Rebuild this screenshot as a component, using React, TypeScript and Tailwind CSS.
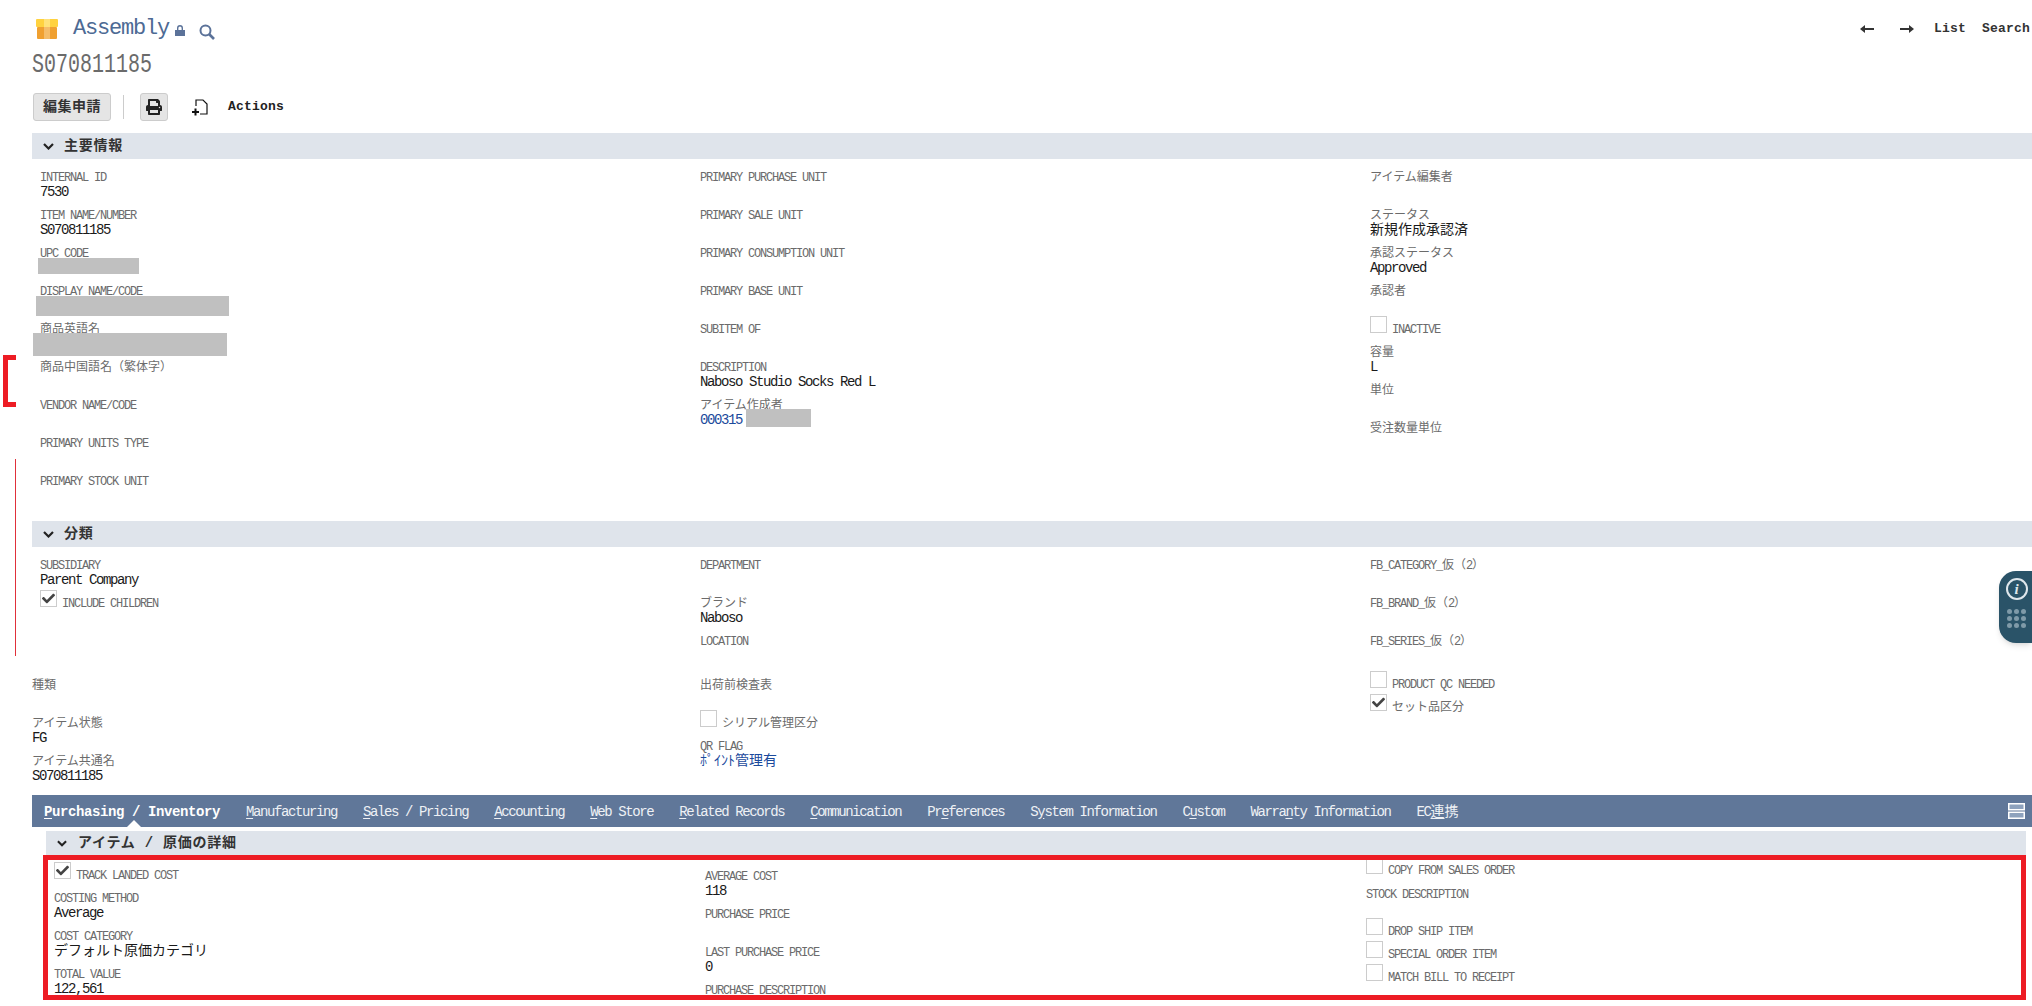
import React from 'react';
import { FaCheck, FaPrint } from 'react-icons/fa';

const MONO = 'font-["Liberation_Mono","Noto_Sans_CJK_JP",monospace]';

// ASCII gets squeezed to half width, CJK keeps its full width
const Txt: React.FC<{ text: string; ascii: string }> = ({ text, ascii }) => {
  const parts = text.match(/[\x20-\x7e]+|[^\x20-\x7e]+/g) || [];
  return (
    <>
      {parts.map((p, i) =>
        /^[\x20-\x7e]/.test(p) ? (
          <span key={i} className={`whitespace-pre ${ascii}`}>{p}</span>
        ) : (
          <span key={i} className="whitespace-pre">{p}</span>
        )
      )}
    </>
  );
};

const Label: React.FC<{ text: string }> = ({ text }) => (
  <div className="h-[15px] text-[12px] leading-[18px] text-[#6b6b6b] whitespace-nowrap">
    <Txt text={text} ascii="tracking-[-1.2px]" />
  </div>
);

const Value: React.FC<{ text: string; link?: boolean }> = ({ text, link }) => (
  <div className={`h-[15px] text-[14px] leading-[17px] whitespace-nowrap ${link ? 'text-[#1b4a9c]' : 'text-[#1a1a1a]'}`}>
    <Txt text={text} ascii="tracking-[-1.4px]" />
  </div>
);

const Field: React.FC<{ label: string; value?: string; link?: boolean; children?: React.ReactNode }> = ({ label, value, link, children }) => (
  <div className="relative h-[38px]">
    <Label text={label} />
    {value && <Value text={value} link={link} />}
    {children}
  </div>
);

const Redact: React.FC<{ className: string }> = ({ className }) => (
  <div className={`absolute bg-[#c0c0c0] ${className}`} />
);

const Box: React.FC<{ checked?: boolean }> = ({ checked }) => (
  <div className="w-[17px] h-[17px] shrink-0 border border-[#cccccc] bg-white flex items-center justify-center">
    {checked && <FaCheck className="text-[#444444] w-[13px] h-[13px]" />}
  </div>
);

const Check: React.FC<{ label: string; checked?: boolean; className?: string }> = ({ label, checked, className = '-mt-[5px] h-[28px]' }) => (
  <div className={`flex items-start gap-[5px] ${className}`}>
    <Box checked={checked} />
    <div className="mt-[5px]">
      <Label text={label} />
    </div>
  </div>
);

const Chevron: React.FC<{ size?: number }> = ({ size = 11 }) => (
  <svg width={size} height={7} viewBox="0 0 11 7" fill="none" stroke="#222222" strokeWidth="2.2">
    <path d="M1 1l4.5 4.5L10 1" />
  </svg>
);

const SectionHead: React.FC<{ title: string }> = ({ title }) => (
  <div className="h-[26px] ml-[32px] bg-[#dfe4eb] flex items-center pl-[11px] gap-[10px]">
    <Chevron />
    <span className="text-[14px] font-bold tracking-[0.75px] text-[#333333]">{title}</span>
  </div>
);

const tabs: [string, string, string][] = [
  ['', 'M', 'anufacturing'],
  ['', 'S', 'ales / Pricing'],
  ['', 'A', 'ccounting'],
  ['', 'W', 'eb Store'],
  ['', 'R', 'elated Records'],
  ['', 'C', 'ommunication'],
  ['Pr', 'e', 'ferences'],
  ['S', 'y', 'stem Information'],
  ['C', 'u', 'stom'],
  ['Warra', 'n', 'ty Information'],
];

const Tab: React.FC<{ parts: [string, string, string] }> = ({ parts }) => (
  <span className="text-[14px] leading-[15px] text-[#eef1f5] tracking-[-1.4px] whitespace-pre">
    {parts[0]}
    <span className="underline underline-offset-2">{parts[1]}</span>
    {parts[2]}
  </span>
);

const Header: React.FC = () => (
  <div className="h-[50px] pt-[19px] pl-[36px] pr-[2px] flex items-start">
    <svg width="22" height="20" viewBox="0 0 22 20" className="shrink-0">
      <rect x="0" y="0" width="22" height="8" rx="1" fill="#ffd23f" />
      <rect x="1" y="8" width="20" height="12" rx="1" fill="#f0a030" />
      <rect x="8" y="0" width="6" height="8" fill="#ffe27a" />
      <rect x="8" y="8" width="6" height="12" fill="#f5bd6a" />
    </svg>
    <span className="ml-[15px] w-[96px] text-[22px] leading-[20px] tracking-[-1.2px] text-[#4d6a94]">Assembly</span>
    <svg width="10" height="11" viewBox="0 0 10 11" className="ml-[6px] mt-[6px] shrink-0" fill="#5b7299">
      <path d="M0 5h10v6H0z" />
      <path d="M2 5V3a3 3 0 016 0v2H6.6V3a1.6 1.6 0 00-3.2 0v2z" />
    </svg>
    <svg width="16" height="16" viewBox="0 0 16 16" className="ml-[14px] mt-[5px] shrink-0" fill="none" stroke="#5b7299" strokeWidth="2">
      <circle cx="6.5" cy="6.5" r="5" />
      <path d="M10 10l5 5" strokeWidth="2.6" />
    </svg>
    <div className="ml-auto flex items-center h-[20px] text-[13px] font-bold tracking-[0.2px] text-[#333333]">
      <svg width="14" height="10" viewBox="0 0 14 10" fill="#333333">
        <path d="M0 5l5-4v3h9v2H5v3z" />
      </svg>
      <svg width="14" height="10" viewBox="0 0 14 10" fill="#333333" className="ml-[26px]">
        <path d="M14 5L9 1v3H0v2h9v3z" />
      </svg>
      <span className="ml-[20px]">List</span>
      <span className="ml-[16px]">Search</span>
    </div>
  </div>
);

const Toolbar: React.FC = () => (
  <div className="mt-[13px] ml-[33px] h-[28px] flex items-center">
    <div className="w-[78px] h-[28px] bg-[#e5e5e5] border border-[#cccccc] rounded-[3px] flex items-center justify-center text-[14px] font-bold tracking-[0.5px] text-[#333333]">
      編集申請
    </div>
    <div className="ml-[12px] w-px h-[24px] bg-[#cccccc]" />
    <div className="ml-[16px] w-[28px] h-[28px] bg-[#e5e5e5] border border-[#cccccc] rounded-[3px] flex items-center justify-center">
      <FaPrint className="w-[16px] h-[16px] text-[#222222]" />
    </div>
    <svg width="16" height="17" viewBox="0 0 16 17" className="ml-[24px] shrink-0" fill="none" stroke="#111111" strokeWidth="1.2">
      <path d="M4 7V1h7l4 4v10H8" />
      <path d="M0 13h7M3.5 9.5v7" strokeWidth="2" />
    </svg>
    <span className="ml-[20px] text-[13px] font-bold tracking-[0.2px] text-[#222222]">Actions</span>
  </div>
);

const App: React.FC = () => {
  return (
    <div className={`relative w-[2032px] h-[1006px] overflow-hidden bg-white ${MONO}`}>
      <Header />
      <div className="h-[30px] ml-[32px] text-[20px] leading-[30px] text-[#6b6b6b] scale-y-[1.35] origin-center">S070811185</div>
      <Toolbar />

      <div className="mt-[12px]">
        <SectionHead title="主要情報" />
      </div>
      <div className="pt-[10px] pb-[10px] pl-[40px] grid grid-cols-[660px_670px_1fr] h-[362px]">
        <div>
          <Field label="INTERNAL ID" value="7530" />
          <Field label="ITEM NAME/NUMBER" value="S070811185" />
          <Field label="UPC CODE">
            <Redact className="-left-[2px] top-[13px] w-[101px] h-[16px]" />
          </Field>
          <Field label="DISPLAY NAME/CODE">
            <Redact className="-left-[4px] top-[13px] w-[193px] h-[20px]" />
          </Field>
          <Field label="商品英語名">
            <Redact className="-left-[7px] top-[12px] w-[194px] h-[23px]" />
          </Field>
          <Field label="商品中国語名（繁体字）" />
          <Field label="VENDOR NAME/CODE" />
          <Field label="PRIMARY UNITS TYPE" />
          <Field label="PRIMARY STOCK UNIT" />
        </div>
        <div>
          <Field label="PRIMARY PURCHASE UNIT" />
          <Field label="PRIMARY SALE UNIT" />
          <Field label="PRIMARY CONSUMPTION UNIT" />
          <Field label="PRIMARY BASE UNIT" />
          <Field label="SUBITEM OF" />
          <Field label="DESCRIPTION" value="Naboso Studio Socks Red L" />
          <Field label="アイテム作成者" value="000315" link>
            <Redact className="left-[46px] top-[12px] w-[65px] h-[18px]" />
          </Field>
        </div>
        <div>
          <Field label="アイテム編集者" />
          <Field label="ステータス" value="新規作成承認済" />
          <Field label="承認ステータス" value="Approved" />
          <Field label="承認者" />
          <Check label="INACTIVE" />
          <Field label="容量" value="L" />
          <Field label="単位" />
          <Field label="受注数量単位" />
        </div>
      </div>

      <SectionHead title="分類" />
      <div className="pt-[10px] pl-[40px] grid grid-cols-[660px_670px_1fr] h-[124px]">
        <div>
          <Field label="SUBSIDIARY" value="Parent Company" />
          <Check label="INCLUDE CHILDREN" checked />
        </div>
        <div>
          <Field label="DEPARTMENT" />
          <Field label="ブランド" value="Naboso" />
          <Field label="LOCATION" />
        </div>
        <div>
          <Field label="FB_CATEGORY_仮（2）" />
          <Field label="FB_BRAND_仮（2）" />
          <Field label="FB_SERIES_仮（2）" />
        </div>
      </div>

      <div className="pl-[32px] grid grid-cols-[668px_670px_1fr] h-[124px]">
        <div className="pt-[6px]">
          <Field label="種類" />
          <Field label="アイテム状態" value="FG" />
          <Field label="アイテム共通名" value="S070811185" />
        </div>
        <div className="pt-[6px]">
          <Field label="出荷前検査表" />
          <Check label="シリアル管理区分" />
          <Field label="QR FLAG" value="ﾎﾟｲﾝﾄ管理有" link />
        </div>
        <div>
          <Check label="PRODUCT QC NEEDED" className="h-[23px]" />
          <Check label="セット品区分" checked className="h-[23px]" />
        </div>
      </div>

      {/* tab bar */}
      <div className="relative ml-[32px] h-[32px] pt-[2px] bg-[#607799] flex items-center pl-[12px] gap-[26px]">
        <span className="text-[14px] leading-[15px] font-bold text-white tracking-[-0.4px] whitespace-pre">
          <span className="underline underline-offset-2">P</span>urchasing / Inventory
        </span>
        {tabs.map((t) => (
          <Tab key={t[1] + t[2]} parts={t} />
        ))}
        <span className="text-[14px] leading-[15px] text-[#eef1f5] whitespace-pre">
          <span className="tracking-[-1.4px]">EC</span>
          <span className="underline underline-offset-2">連</span>携
        </span>
        <div className="absolute left-[95px] bottom-0 w-0 h-0 border-x-[7px] border-x-transparent border-b-[7px] border-b-white" />
        <svg width="17" height="16" viewBox="0 0 17 16" className="absolute right-[7px] top-[8px]" fill="#8ea2bd" stroke="#ffffff" strokeWidth="1.5">
          <rect x="0.75" y="0.75" width="15.5" height="6" />
          <rect x="0.75" y="9.25" width="15.5" height="6" />
        </svg>
      </div>

      <div className="mt-[4px] ml-[46px] mr-[6px] h-[24px] pt-px bg-[#dfe4eb] flex items-center pl-[11px] gap-[11px]">
        <Chevron size={10} />
        <span className="text-[14px] font-bold tracking-[0.75px] text-[#333333] whitespace-pre">アイテム / 原価の詳細</span>
      </div>

      <div className="ml-[43px] mr-[6px] h-[145px] border-[5px] border-[#ed1c24] overflow-hidden pl-[6px] grid grid-cols-[651px_661px_1fr]">
        <div className="pt-[2px]">
          <Check label="TRACK LANDED COST" checked className="h-[28px]" />
          <Field label="COSTING METHOD" value="Average" />
          <Field label="COST CATEGORY" value="デフォルト原価カテゴリ" />
          <Field label="TOTAL VALUE" value="122,561" />
        </div>
        <div className="pt-[8px]">
          <Field label="AVERAGE COST" value="118" />
          <Field label="PURCHASE PRICE" />
          <Field label="LAST PURCHASE PRICE" value="0" />
          <Field label="PURCHASE DESCRIPTION" />
        </div>
        <div className="-mt-[3px]">
          <Check label="COPY FROM SALES ORDER" className="h-[29px]" />
          <div className="h-[32px]">
            <Label text="STOCK DESCRIPTION" />
          </div>
          <Check label="DROP SHIP ITEM" className="h-[23px]" />
          <Check label="SPECIAL ORDER ITEM" className="h-[23px]" />
          <Check label="MATCH BILL TO RECEIPT" className="h-[23px]" />
        </div>
      </div>

      {/* red annotation marks drawn on the screenshot */}
      <div className="absolute left-[3px] top-[355px] w-[13px] h-[52px] border-y-[5px] border-l-[5px] border-[#ed1c24]" />
      <div className="absolute left-[15px] top-[459px] w-px h-[197px] bg-[#e0303a]" />

      {/* floating help widget */}
      <div className="absolute left-[1999px] top-[571px] w-[33px] h-[72px] bg-[#2a5368] rounded-l-[17px] shadow-md flex flex-col items-center">
        <div className="mt-[7px] ml-[2px] w-[22px] h-[22px] rounded-full border-2 border-[#dfe7ec] flex items-center justify-center text-[#dfe7ec] font-['Liberation_Serif',serif] italic font-bold text-[15px] leading-none">
          i
        </div>
        <div className="mt-[9px] ml-[2px] grid grid-cols-3 gap-x-[2px] gap-y-[2px]">
          {Array.from({ length: 9 }).map((_, i) => (
            <div key={i} className="w-[5px] h-[5px] rounded-full bg-[#7f9aa8]" />
          ))}
        </div>
      </div>
    </div>
  );
};

export default App;
